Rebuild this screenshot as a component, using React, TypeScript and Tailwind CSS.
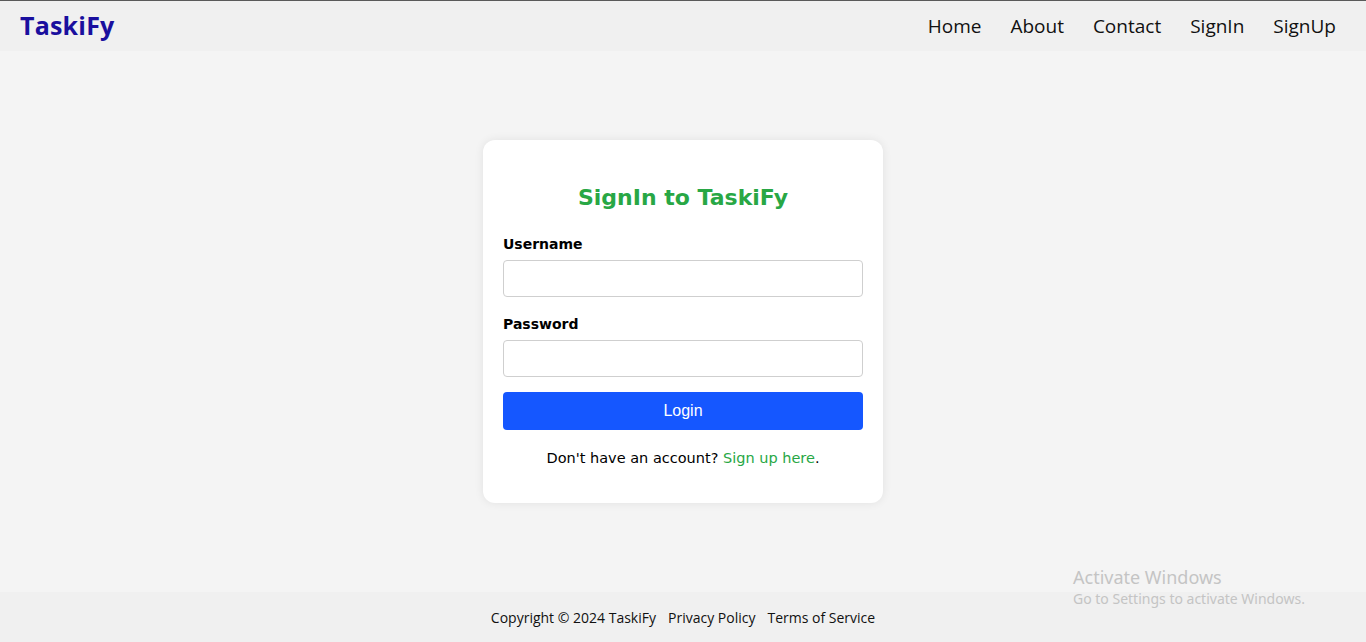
import React from "react";

export default function App() {
  const poppins = { fontFamily: "'Open Sans', 'Noto Sans', sans-serif" };
  const comic = { fontFamily: "'DejaVu Sans', 'Liberation Sans', sans-serif" };
  return (
    <div className="relative flex h-[642px] w-[1366px] flex-col overflow-hidden border-t border-[#5a5a5a] bg-[#f4f4f4]">
      <header className="flex h-[50px] shrink-0 items-center justify-between bg-[#f0f0f0] pl-5 pr-[30px]" style={poppins}>
        <div className="text-[25px] font-bold tracking-[0.2px] text-[#1a0f9e]">TaskiFy</div>
        <nav className="flex items-center gap-[29px] text-[19px] text-[#111]">
          <a>Home</a>
          <a>About</a>
          <a>Contact</a>
          <a>SignIn</a>
          <a>SignUp</a>
        </nav>
      </header>

      <main className="flex flex-1 items-start justify-center pt-[89px]">
        <div className="w-[400px] rounded-[12px] bg-white px-5 pb-[34px] pt-[42px] shadow-[0_0_10px_rgba(0,0,0,0.08)]" style={comic}>
          <h2 className="mb-[20px] text-center text-[22px] font-bold leading-[32px] text-[#28a745]">SignIn to TaskiFy</h2>
          <label className="block text-[14px] font-bold leading-[20px] text-black">Username</label>
          <input className="mt-[6px] block h-[37px] w-full rounded-[4px] border border-[#cfcfcf] bg-white" />
          <label className="mt-[17px] block text-[14px] font-bold leading-[20px] text-black">Password</label>
          <input type="password" className="mt-[6px] block h-[37px] w-full rounded-[4px] border border-[#cfcfcf] bg-white" />
          <button className="mt-[15px] block h-[38px] w-full rounded-[4px] bg-[#1557ff] text-[16px] text-white" style={{ fontFamily: "'Liberation Sans', Arial, sans-serif" }}>Login</button>
          <p className="mt-[17px] text-center text-[14.5px] leading-[22px] text-black">
            Don't have an account? <a className="text-[#28a745]">Sign up here</a>.
          </p>
        </div>
      </main>

      <footer className="flex h-[50px] shrink-0 items-center justify-center gap-[12px] bg-[#f0f0f0] text-[14px] text-[#111]" style={poppins}>
        <span>Copyright © 2024 TaskiFy</span>
        <a>Privacy Policy</a>
        <a>Terms of Service</a>
      </footer>

      <div className="pointer-events-none absolute left-[1073px] top-[564px] text-[#c4c4c4]" style={{ fontFamily: "'Noto Sans', 'Open Sans', sans-serif" }}>
        <div className="text-[18px] leading-[24px]">Activate Windows</div>
        <div className="text-[14px] leading-[20px]">Go to Settings to activate Windows.</div>
      </div>
    </div>
  );
}
